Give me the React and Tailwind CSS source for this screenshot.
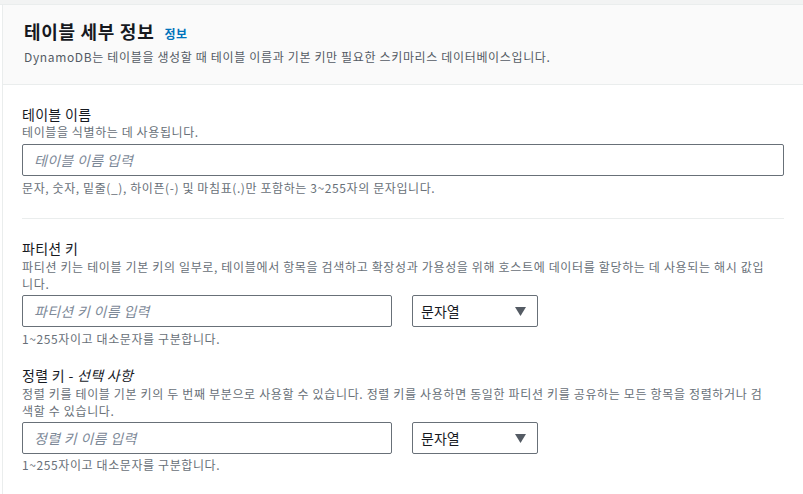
import React from "react";

const Hint = ({ children, className = "" }) => (
  <p className={`text-[12px] leading-[16px] tracking-[0.6px] text-[#687078] whitespace-nowrap ${className}`}>{children}</p>
);

const TextInput = ({ placeholder, className = "" }) => (
  <input
    type="text"
    placeholder={placeholder}
    className={`h-[32px] border border-[#687078] rounded-[2px] px-[11px] text-[14px] tracking-[0.3px] text-[#16191f] placeholder:text-[#7d8998] placeholder:italic outline-none ${className}`}
  />
);

const TypeSelect = () => (
  <div className="h-[32px] w-[126px] border border-[#687078] rounded-[2px] flex items-center justify-between pl-[8px] pr-[11px]">
    <span className="text-[14px] text-[#16191f]">문자열</span>
    <svg width="11" height="9" viewBox="0 0 11 9">
      <path d="M0 0 H11 L5.5 9 Z" fill="#545b64" />
    </svg>
  </div>
);

const App = () => {
  return (
    <div
      className="w-[803px] h-[494px] bg-white overflow-hidden"
      style={{ fontFamily: '"Noto Sans CJK KR", "Liberation Sans", sans-serif' }}
    >
      <div className="h-[4px] bg-[#f2f3f3] border-b border-[#eaeded] box-content" />
      <div className="ml-[2px] border-l border-[#eaeded] h-full">
        {/* header */}
        <div className="bg-[#fafafa] border-b border-[#eaeded] px-[21px] pt-[15px] pb-[19px]">
          <div className="flex items-baseline gap-[10px]">
            <h2 className="text-[18px] leading-[22px] font-bold tracking-[0.7px] text-[#16191f]">테이블 세부 정보</h2>
            <a className="text-[12px] text-[#0073bb] font-bold tracking-[0.5px]">정보</a>
          </div>
          <p className="mt-[6px] text-[12px] leading-[16px] tracking-[0.65px] text-[#545b64]">
            DynamoDB는 테이블을 생성할 때 테이블 이름과 기본 키만 필요한 스키마리스 데이터베이스입니다.
          </p>
        </div>

        <div className="px-[19px]">
          {/* table name */}
          <div className="pt-[20px] pb-[22px] border-b border-[#eaeded]">
            <label className="block text-[14px] leading-[19px] tracking-[0.3px] text-[#16191f]">테이블 이름</label>
            <Hint>테이블을 식별하는 데 사용됩니다.</Hint>
            <TextInput placeholder="테이블 이름 입력" className="mt-[4px] w-full" />
            <Hint className="mt-[4px]">문자, 숫자, 밑줄(_), 하이픈(-) 및 마침표(.)만 포함하는 3~255자의 문자입니다.</Hint>
          </div>

          {/* partition key */}
          <div className="pt-[20px]">
            <label className="block text-[14px] leading-[19px] tracking-[0.3px] text-[#16191f]">파티션 키</label>
            <p className="text-[12px] leading-[17px] tracking-[0.65px] text-[#687078] whitespace-nowrap">
              파티션 키는 테이블 기본 키의 일부로, 테이블에서 항목을 검색하고 확장성과 가용성을 위해 호스트에 데이터를 할당하는 데 사용되는 해시 값입
              <br />
              니다.
            </p>
            <div className="mt-[3px] flex gap-[20px]">
              <TextInput placeholder="파티션 키 이름 입력" className="w-[370px]" />
              <TypeSelect />
            </div>
            <Hint className="mt-[4px]">1~255자이고 대소문자를 구분합니다.</Hint>
          </div>

          {/* sort key */}
          <div className="pt-[19px]">
            <label className="block text-[14px] leading-[19px] tracking-[0.3px] text-[#16191f]">
              정렬 키 - <i>선택 사항</i>
            </label>
            <p className="text-[12px] leading-[17px] tracking-[0.65px] text-[#687078] whitespace-nowrap">
              정렬 키를 테이블 기본 키의 두 번째 부분으로 사용할 수 있습니다. 정렬 키를 사용하면 동일한 파티션 키를 공유하는 모든 항목을 정렬하거나 검
              <br />
              색할 수 있습니다.
            </p>
            <div className="mt-[3px] flex gap-[20px]">
              <TextInput placeholder="정렬 키 이름 입력" className="w-[370px]" />
              <TypeSelect />
            </div>
            <Hint className="mt-[3px]">1~255자이고 대소문자를 구분합니다.</Hint>
          </div>
        </div>
      </div>
    </div>
  );
};

export default App;
